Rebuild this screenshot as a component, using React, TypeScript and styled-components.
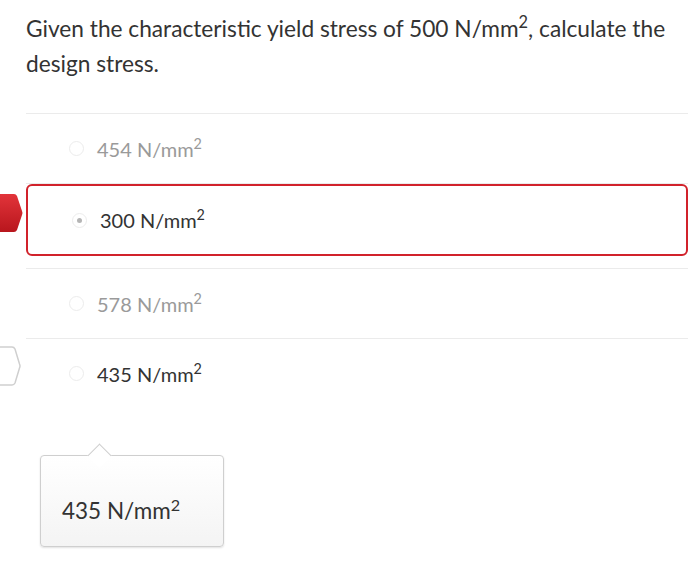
import styled, { createGlobalStyle } from "styled-components"

const GlobalStyle = createGlobalStyle`
    body {
        margin: 0;
        background: #ffffff;
        font-family: Lato, "Open Sans", sans-serif;
        color: #333333;
    }
`

const Page = styled.div`
    width: 700px;
    height: 570px;
    padding: 11px 12px 0 26px;
    box-sizing: border-box;
    position: relative;
    overflow: hidden;
`

const Question = styled.p`
    margin: 0 0 32px;
    font-size: 22.7px;
    line-height: 35px;
    color: #333333;
    sup {
        font-size: 0.72em;
        line-height: 0;
    }
`

const Options = styled.div`
    border-top: 1px solid #ebebeb;
`

const Row = styled.div`
    position: relative;
    border-bottom: 1px solid #ebebeb;
    &:last-child {
        border-bottom: none;
    }
`

const Choice = styled.div<{ $selected?: boolean; $faded?: boolean }>`
    display: flex;
    align-items: center;
    gap: 13px;
    height: ${p => (p.$selected ? "68px" : "69px")};
    padding-left: ${p => (p.$selected ? "44px" : "43px")};
    border: ${p => (p.$selected ? "2px solid #d1222b" : "none")};
    border-radius: 6px;
    margin-bottom: ${p => (p.$selected ? "12px" : "0")};
    color: ${p => (p.$faded ? "#9a9a9a" : "#333333")};
    font-size: 20px;
    sup {
        font-size: 0.72em;
        line-height: 0;
    }
`

const Radio = styled.span<{ $checked?: boolean }>`
    width: 15px;
    height: 15px;
    border-radius: 50%;
    border: 1px solid #ececec;
    box-sizing: border-box;
    display: flex;
    align-items: center;
    justify-content: center;
    &::after {
        content: "";
        width: 5px;
        height: 5px;
        border-radius: 50%;
        background: ${p => (p.$checked ? "#b5b5b5" : "transparent")};
    }
`

const Marker = styled.svg<{ $top: number }>`
    position: absolute;
    left: -26px;
    top: ${p => p.$top}px;
`

const Popover = styled.div`
    position: relative;
    margin: 47px 0 0 14px;
    width: 184px;
    height: 92px;
    box-sizing: border-box;
    border: 1px solid #cfcfcf;
    border-radius: 4px;
    background: linear-gradient(#ffffff, #f4f4f4);
    box-shadow: 0 1px 2px rgba(0, 0, 0, 0.12);
    display: flex;
    align-items: center;
    padding: 18px 0 0 21px;
    font-size: 22.5px;
    color: #333333;
    sup {
        font-size: 0.72em;
        line-height: 0;
    }
    &::before {
        content: "";
        position: absolute;
        top: -9px;
        left: 50px;
        width: 16px;
        height: 16px;
        background: #ffffff;
        border-left: 1px solid #cfcfcf;
        border-top: 1px solid #cfcfcf;
        transform: rotate(45deg);
    }
`

const RedMarker = () => (
    <Marker width="24" height="40" viewBox="0 0 24 40" $top={9}>
        <defs>
            <linearGradient id="rg" x1="0" y1="0" x2="0" y2="1">
                <stop offset="0" stopColor="#e2343a" />
                <stop offset="1" stopColor="#b8161d" />
            </linearGradient>
        </defs>
        <path d="M0 1 H14 Q16 1 17 3 L22 18 Q23 20 22 22 L17 37 Q16 39 14 39 H0 Z" fill="url(#rg)" />
    </Marker>
)

const WhiteMarker = () => (
    <Marker width="22" height="42" viewBox="0 0 22 42" $top={6}>
        <path d="M-2 2 H12 Q14 2 15 4 L19.5 19 Q20.5 21 19.5 23 L15 38 Q14 40 12 40 H-2 Z" fill="#ffffff" stroke="#cfcfcf" strokeWidth="1.5" />
    </Marker>
)

const options = [
    { value: "454", faded: true },
    { value: "300", selected: true },
    { value: "578", faded: true },
    { value: "435", marked: true },
]

const App = () => {
    return (
        <Page>
            <GlobalStyle />
            <Question>
                Given the characteristic yield stress of 500 N/mm<sup>2</sup>, calculate the design stress.
            </Question>
            <Options>
                {options.map(o => (
                    <Row key={o.value}>
                        {o.selected && <RedMarker />}
                        {o.marked && <WhiteMarker />}
                        <Choice $selected={o.selected} $faded={o.faded}>
                            <Radio $checked={o.selected} />
                            <span>
                                {o.value} N/mm<sup>2</sup>
                            </span>
                        </Choice>
                    </Row>
                ))}
            </Options>
            <Popover>
                <span>
                    435 N/mm<sup>2</sup>
                </span>
            </Popover>
        </Page>
    )
}

export default App
